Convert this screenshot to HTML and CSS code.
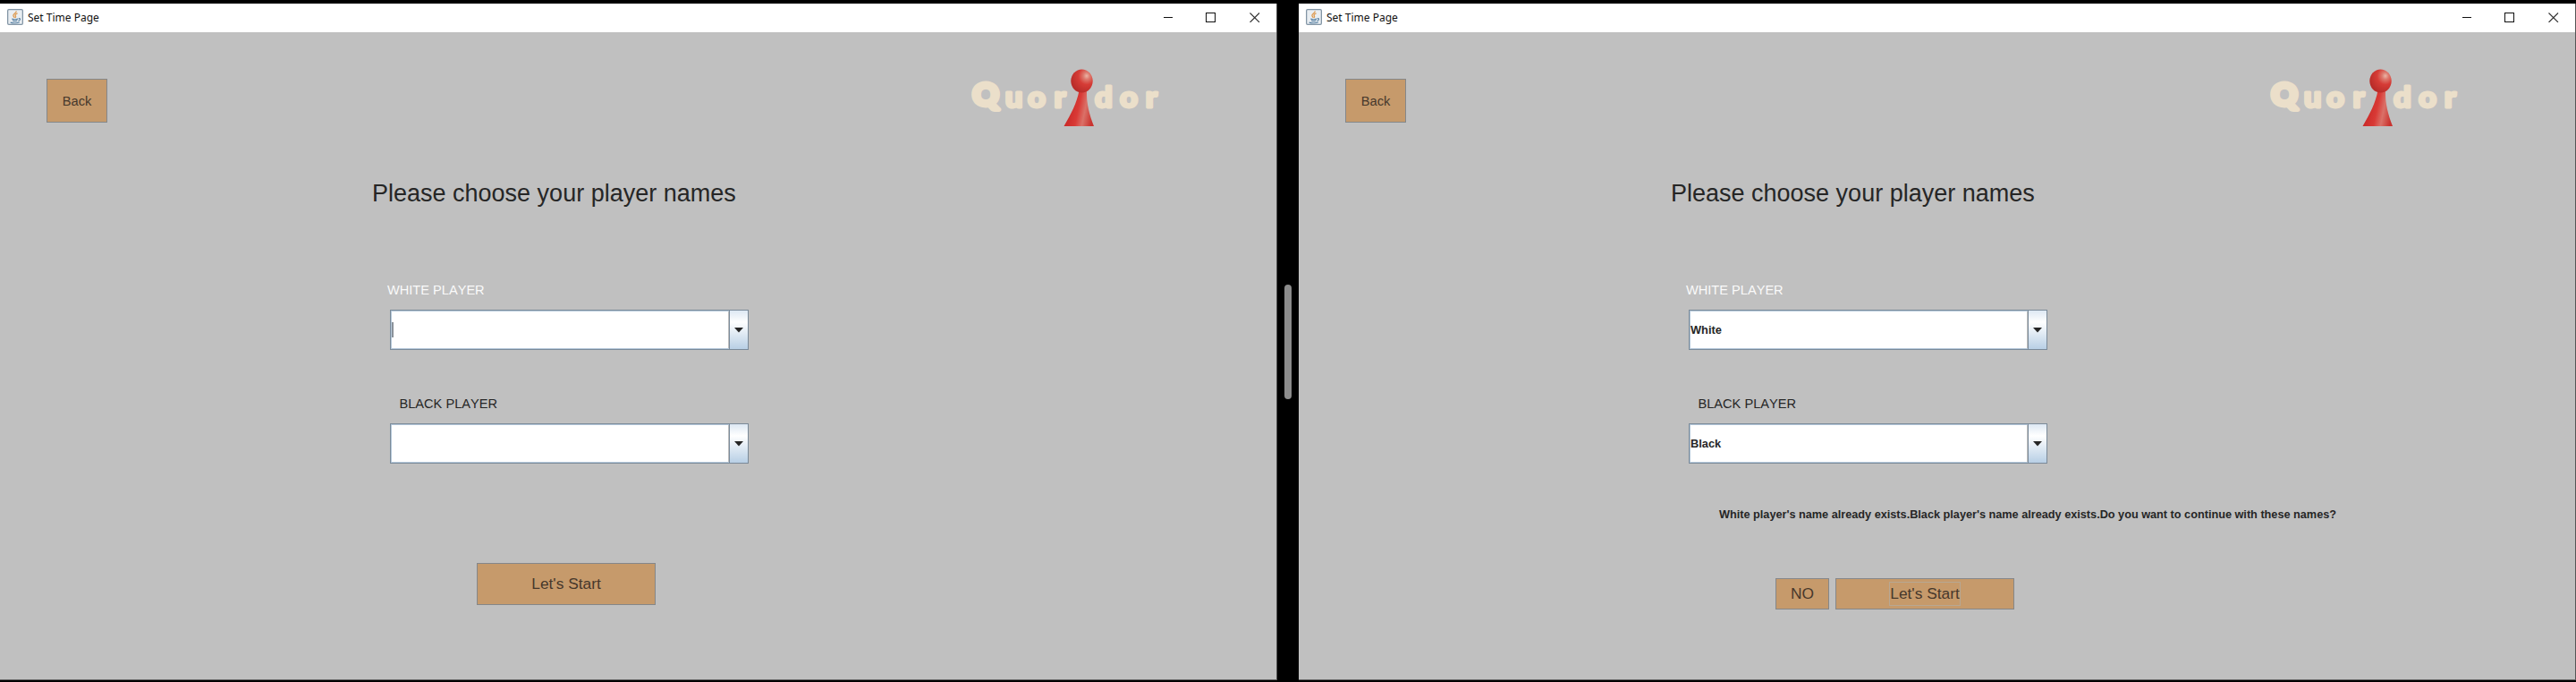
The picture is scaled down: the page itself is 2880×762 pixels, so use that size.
FILE: index.html
```
<!DOCTYPE html>
<html lang="en">
<head>
<meta charset="utf-8">
<title>Set Time Page</title>
<link rel="stylesheet" href="styles.css">
</head>
<body>
<svg class="defs" width="0" height="0" aria-hidden="true">
  <defs>
    <radialGradient id="head" cx="0.72" cy="0.28" r="0.75">
      <stop offset="0" stop-color="#eab5a6"/>
      <stop offset="0.2" stop-color="#dd7a6e"/>
      <stop offset="0.5" stop-color="#d63c36"/>
      <stop offset="1" stop-color="#b92c29"/>
    </radialGradient>
    <linearGradient id="cone" x1="0" y1="0.3" x2="1" y2="0.55">
      <stop offset="0.2" stop-color="#cb2a28"/>
      <stop offset="0.5" stop-color="#d93a36"/>
      <stop offset="0.72" stop-color="#da7168"/>
      <stop offset="1" stop-color="#c9332f"/>
    </linearGradient>
    <symbol id="java" viewBox="0 0 17 17">
      <rect x="0.6" y="0.6" width="15.8" height="15.8" rx="1.2" fill="#e9eef2" stroke="#8295a5" stroke-width="1.2"/>
      <path d="M9.6 2.2C10 4.3 6.2 5 6.5 7c.1.9 1 1.400 1.300 2.300M10.900 4.700C8.800 5.400 8 6.300 8.900 7.500c.5.8.2 1.300-.3 1.800" fill="none" stroke="#dd9a50" stroke-width="1.200"/>
      <path d="M5 10.300c1.500.8 4.800.8 6.400 0M5.700 12.200c1.300.6 3.600.6 5 0M3.500 14.300c2.500.9 7.200.8 9.500-.3M12 10c2.300-.6 2.200 2-.3 2.500" fill="none" stroke="#527c9f" stroke-width="1.100"/>
    </symbol>
    <symbol id="logo" viewBox="0 0 220 70">
      <g class="logo-text" transform="scale(1.05 1)">
        <text class="logo-q" x="2.500" y="44.500">Q</text>
        <text x="37 61 89" y="46">uor</text>
        <text x="132.500 159 186.500" y="46">dor</text>
      </g>
      <path d="M121.500 27H130C129.500 42 133 54 138 67H104.500C112 54 119 41 121.500 27Z" fill="url(#cone)"/>
      <ellipse cx="124.500" cy="16.500" rx="12.200" ry="13" fill="url(#head)"/>
    </symbol>
    <symbol id="controls" viewBox="0 0 110 12">
      <g fill="none" stroke="#111" stroke-width="1">
        <path d="M0 6.500H10"/>
        <rect x="47.500" y="1.500" width="10" height="10"/>
        <path d="M96.500 1.500L107 12M107 1.500L96.500 12" stroke="#333" stroke-width="1.100"/>
      </g>
    </symbol>
    <symbol id="arrow" viewBox="0 0 10 6"><path d="M0 0H10L5 5.500Z" fill="#252525"/></symbol>
  </defs>
</svg>
<main class="desktop">
  <section class="window">
    <header class="titlebar">
      <svg class="java"><use href="#java"/></svg>
      <span class="caption">Set Time Page</span>
      <svg class="controls"><use href="#controls"/></svg>
    </header>
    <div class="content">
      <div class="top">
        <button class="btn back">Back</button>
        <svg class="logo" role="img" aria-label="Quoridor"><use href="#logo"/></svg>
      </div>
      <h1 class="heading"><span>Please choose your player names</span></h1>
      <div class="label white"><span>WHITE PLAYER</span></div>
      <div class="combo"><div class="field"><i class="caret"></i></div><div class="drop"><svg><use href="#arrow"/></svg></div></div>
      <div class="label black"><span>BLACK PLAYER</span></div>
      <div class="combo"><div class="field"></div><div class="drop"><svg><use href="#arrow"/></svg></div></div>
      <div class="actions tall"><button class="btn start">Let's Start</button></div>
    </div>
  </section>
  <div class="gutter"><div class="thumb"></div></div>
  <section class="window">
    <header class="titlebar">
      <svg class="java"><use href="#java"/></svg>
      <span class="caption">Set Time Page</span>
      <svg class="controls"><use href="#controls"/></svg>
    </header>
    <div class="content">
      <div class="top">
        <button class="btn back">Back</button>
        <svg class="logo" role="img" aria-label="Quoridor"><use href="#logo"/></svg>
      </div>
      <h1 class="heading"><span>Please choose your player names</span></h1>
      <div class="label white"><span>WHITE PLAYER</span></div>
      <div class="combo"><div class="field">White</div><div class="drop"><svg><use href="#arrow"/></svg></div></div>
      <div class="label black"><span>BLACK PLAYER</span></div>
      <div class="combo"><div class="field">Black</div><div class="drop"><svg><use href="#arrow"/></svg></div></div>
      <p class="message"><span>White player's name already exists.Black player's name already exists.Do you want to continue with these names?</span></p>
      <div class="actions short"><button class="btn no">NO</button><button class="btn start"><span class="focus">Let's Start</span></button></div>
    </div>
  </section>
</main>
</body>
</html>
```
FILE: styles.css
```
* { box-sizing: border-box; }
body {
  margin: 0;
  background: #000;
  font-family: "Liberation Sans", Arial, sans-serif;
  font-kerning: none;
  color: #262626;
}
.defs { display: block; }
.desktop {
  display: grid;
  grid-template-columns: 1428px 24px 1428px;
  height: 762px;
  padding: 4px 0 2px;
}
.window {
  display: flex;
  flex-direction: column;
  background: #c0c0c0;
  border-right: 1px solid #555;
  border-bottom: 1px solid #666;
}
.titlebar {
  display: flex;
  align-items: center;
  height: 32px;
  padding: 0 18px 0 8px;
  background: #fff;
}
.java { width: 18px; height: 18px; margin-top: -2px; }
.caption {
  margin: -1px auto 0 5px;
  font: 12px/16px "Noto Sans", sans-serif;
  color: #111;
}
.controls { width: 110px; height: 12px; margin-top: -2px; margin-right: -2px; }
.content { display: flex; flex-direction: column; align-items: flex-start; }
.top { display: flex; align-items: flex-start; padding: 38px 0 0 52px; }
.btn {
  padding: 0;
  border: 1px solid #858789;
  border-radius: 0;
  background: #c69a6b;
  color: #46382b;
  font: 17.33px "Liberation Sans", Arial, sans-serif;
  font-kerning: none;
}
.back { width: 68px; height: 49px; margin-top: 14px; font-size: 14.67px; }
.logo { width: 220px; height: 70px; margin-left: 965px; }
.logo-text {
  font: 900 33px Lato, "Liberation Sans", sans-serif;
  fill: #ebdfca;
  stroke: #ebdfca;
  stroke-width: 3px;
  stroke-linejoin: round;
}
.logo-q { font-size: 34px; stroke-width: 5px; }
.heading {
  margin: 55px 0 0 416px;
  font-size: 27px;
  font-weight: 400;
  line-height: 34px;
}
.label { font-size: 14.6px; line-height: 18px; }
.white { margin: 82px 0 0 433px; color: #fafafa; }
.black { margin: 51px 0 0 446.5px; }
.combo {
  display: flex;
  width: 401px;
  height: 45px;
  margin: 13px 0 0 436px;
  border: 1px solid #7a8a99;
  box-shadow: inset 0 0 0 1px #b5c8da;
}
.field {
  display: flex;
  align-items: center;
  flex: 1;
  margin: 1px;
  background: #fff;
  font-size: 12.8px;
  font-weight: 700;
}
.caret { width: 2px; height: 17px; background: #8b929a; }
.drop {
  display: flex;
  align-items: center;
  justify-content: center;
  width: 21px;
  border-left: 1px solid #7a8a99;
  background: linear-gradient(#dde8f3, #fff 30%, #b8cfe5);
}
.drop svg { width: 10px; height: 6px; }
.message {
  margin: 48px 0 0 470px;
  font-size: 12.7px;
  font-weight: 700;
  line-height: 18px;
  white-space: nowrap;
}
.actions { display: flex; gap: 7px; margin-left: 533px; }
.start { width: 200px; height: 100%; }
.no { width: 60px; height: 100%; }
.tall { height: 47px; margin-top: 111px; }
.short { height: 35px; margin-top: 62px; }
.focus { display: inline-block; padding: 2px 0; border: 1px solid #b7a793; }
.gutter { padding: 314px 8px 0; }
.thumb { height: 128px; border-radius: 4px; background: #8c8c8c; }
```
